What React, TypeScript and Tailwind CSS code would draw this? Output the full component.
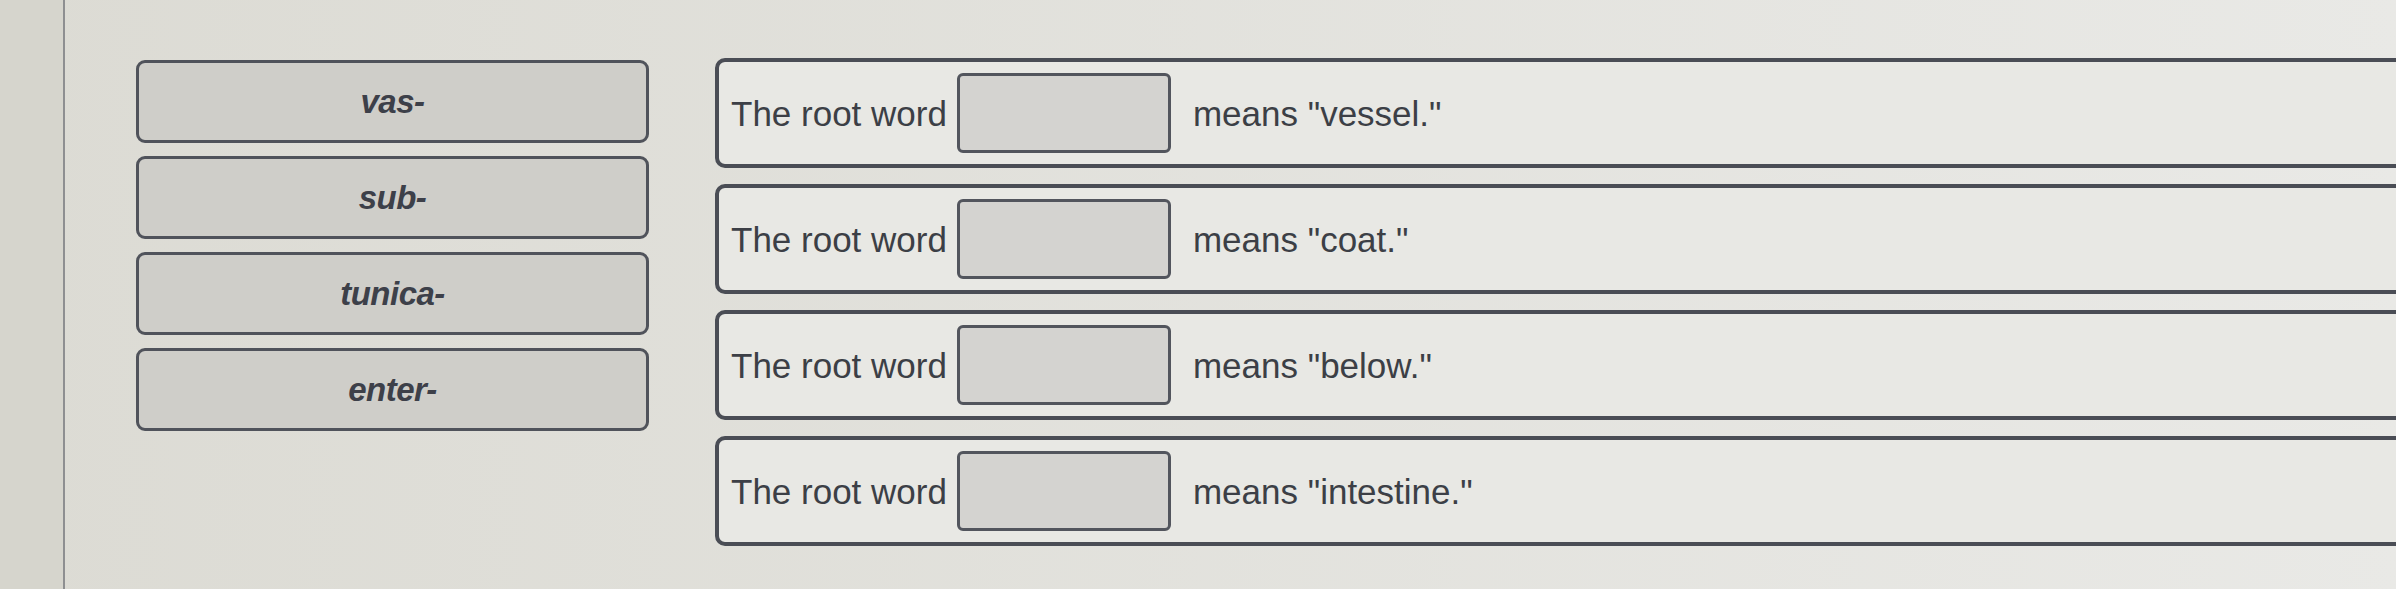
const roots = ['vas-', 'sub-', 'tunica-', 'enter-'];
const meanings = ['vessel.', 'coat.', 'below.', 'intestine.'];

function RootCard({ label }: { label: string }) {
  return (
    <div className="flex h-[83px] w-[513px] items-center justify-center rounded-[9px] border-[3px] border-[#50535b] bg-[#cfcec9]">
      <span className="text-[33px] font-bold italic leading-none tracking-[-0.5px] text-[#3d4049]">{label}</span>
    </div>
  );
}

function SentenceRow({ meaning }: { meaning: string }) {
  return (
    <div className="flex h-[110px] w-[1720px] items-center rounded-[10px] border-4 border-[#4a4d55] bg-[#e8e8e4] pl-[12px]">
      <span className="text-[35px] leading-none text-[#3c3f46]">The root word</span>
      <div className="ml-[10px] h-[80px] w-[214px] shrink-0 rounded-[6px] border-[3px] border-[#52555d] bg-[#d4d3d0]" />
      <span className="ml-[22px] text-[35px] leading-none text-[#3c3f46]">
        means "{meaning}"
      </span>
    </div>
  );
}

export default function App() {
  return (
    <div
      className="flex h-[589px] w-[2396px] overflow-hidden bg-linear-to-r from-[#dcdbd4] to-[#e9e9e6]"
      style={{ fontFamily: '"Liberation Sans", Arial, sans-serif' }}
    >
      <div className="h-full w-[65px] shrink-0 border-r-2 border-[#8e8f91] bg-[#d6d5cd]" />
      <div className="flex shrink-0 pl-[71px]">
        <div className="flex flex-col gap-[13px] pt-[60px]">
          {roots.map((r) => (
            <RootCard key={r} label={r} />
          ))}
        </div>
        <div className="ml-[66px] flex flex-col gap-[16px] pt-[58px]">
          {meanings.map((m) => (
            <SentenceRow key={m} meaning={m} />
          ))}
        </div>
      </div>
    </div>
  );
}
